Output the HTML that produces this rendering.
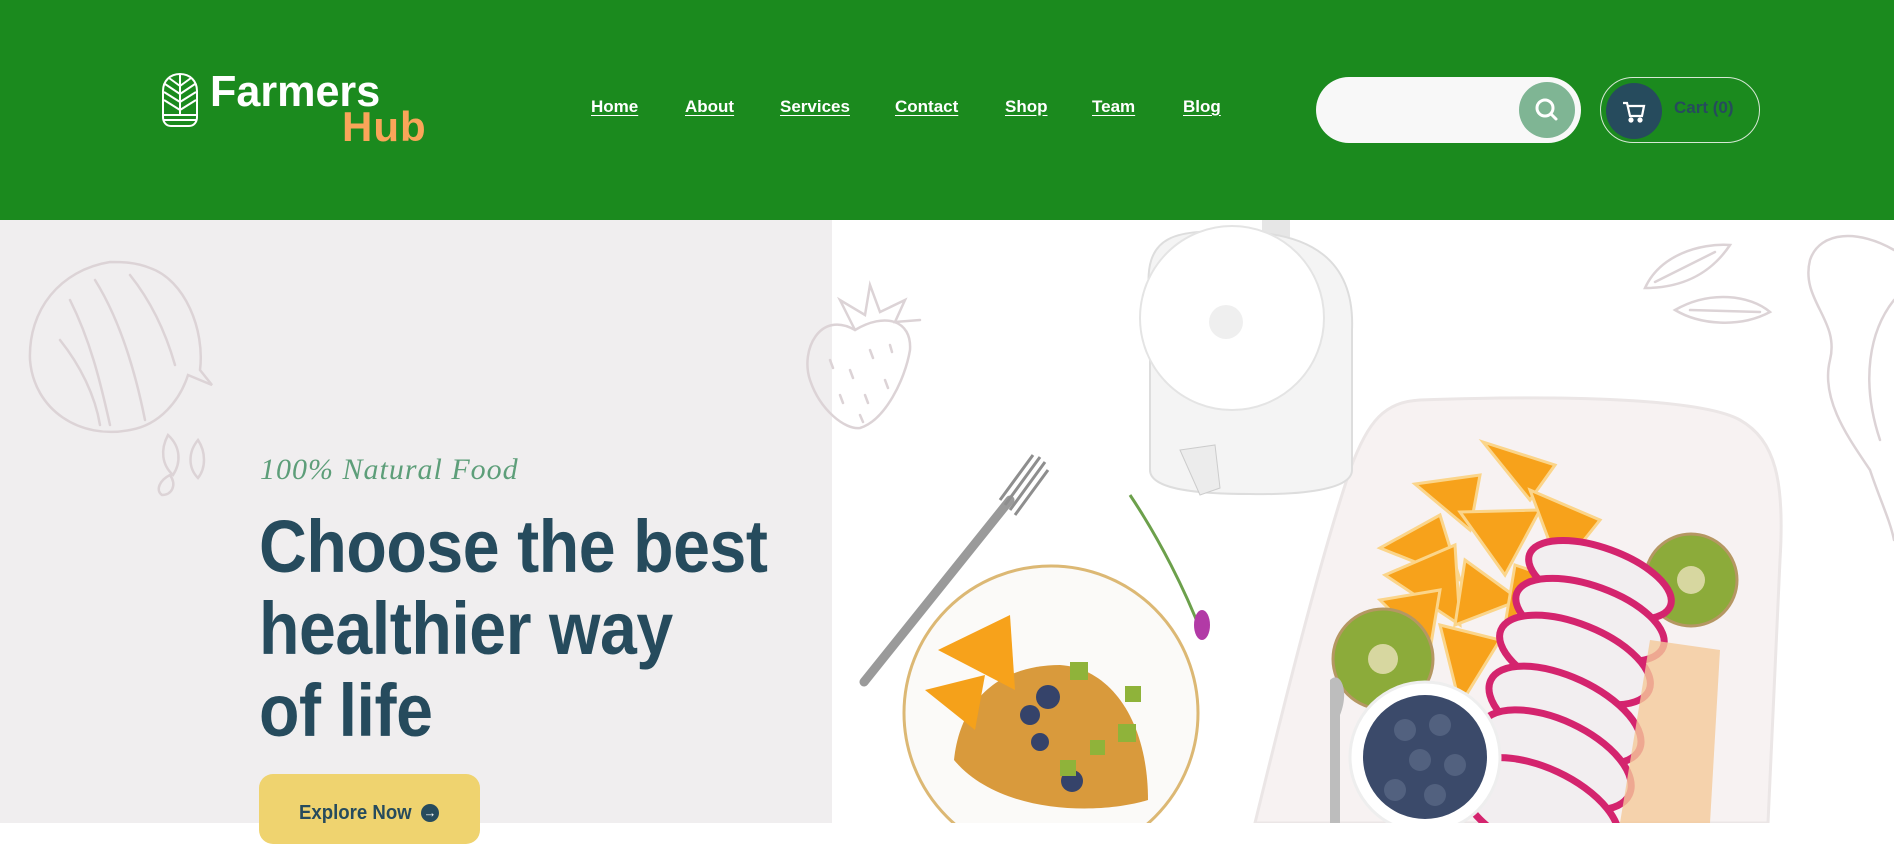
<!DOCTYPE html>
<html><head><meta charset="utf-8">
<style>
*{margin:0;padding:0;box-sizing:border-box}
html,body{width:1894px;height:823px;overflow:hidden;background:#fff;font-family:"Liberation Sans",Arial,sans-serif}
header{position:absolute;left:0;top:0;width:1894px;height:220px;background:#1b8a1e}
.logo-icon{position:absolute;left:161px;top:72px}
.l1{position:absolute;left:210px;top:70px;font:900 44px/1 "Liberation Sans",sans-serif;color:#fff;letter-spacing:0px;transform:scaleX(0.98);transform-origin:left}
.l2{position:absolute;left:342px;top:106px;font:900 42px/1 "Liberation Sans",sans-serif;color:#f9a559;letter-spacing:1px}
nav a{position:absolute;top:97px;color:#fff;font-weight:700;font-size:17px;text-decoration:underline;text-underline-offset:3px}
.search{position:absolute;left:1316px;top:77px;width:265px;height:66px;border-radius:33px;background:#f8f8f8}
.sbtn{position:absolute;left:1519px;top:82px;width:56px;height:56px;border-radius:50%;background:#7fb594}
.cart{position:absolute;left:1600px;top:77px;width:160px;height:66px;border-radius:33px;border:1px solid #d6e8d5}
.cbtn{position:absolute;left:1606px;top:83px;width:56px;height:56px;border-radius:50%;background:#264b5d}
.ctext{position:absolute;left:1674px;top:98px;font-size:17px;font-weight:700;color:#264b5d}
.left{position:absolute;left:0;top:220px;width:832px;height:603px;background:#f0eeef}
.tag{position:absolute;left:260px;top:455px;font:italic 30px/1 "Liberation Serif",serif;color:#5d9e79;letter-spacing:1px}
h1{position:absolute;left:259px;top:506px;font-size:74px;line-height:82px;font-weight:700;color:#264b5d;letter-spacing:-0.5px;transform:scaleX(0.895);transform-origin:left;white-space:nowrap}
.btn{position:absolute;left:259px;top:774px;width:221px;height:70px;border-radius:14px;background:#efd36f}
.btn span{position:absolute;left:40px;top:28px;font-size:20px;font-weight:700;color:#264b5d;transform:scaleX(0.93);transform-origin:left}
.btn i{position:absolute;left:162px;top:30px;width:18px;height:18px;border-radius:50%;background:#264b5d;color:#fff;font-style:normal;font-size:13px;line-height:18px;text-align:center}
svg.art{position:absolute;left:0;top:0}
</style></head><body>
<div class="left"></div>
<svg class="art" width="1894" height="823" viewBox="0 0 1894 823">
 <g fill="none" stroke="#dcd3d6" stroke-width="2.5" stroke-linecap="round">
  <path d="M110 262 C60 270 28 310 30 360 C34 410 80 440 130 430 C160 425 180 400 188 375 L212 385 L200 370 C205 330 185 280 150 268 C135 262 122 262 110 262 Z"/>
  <path d="M70 300 C90 340 100 380 110 425 M95 280 C120 320 135 370 145 420 M60 340 C80 365 95 395 100 425 M130 275 C150 300 165 330 175 365"/>
  <path d="M168 435 c-8 15 -6 30 5 40 c8 -12 8 -28 -5 -40z M198 440 c-10 12 -10 28 0 38 c8 -10 8 -26 0 -38z M170 475 c-10 5 -15 15 -8 20 c10 0 15 -10 8 -20z"/>
  <path d="M855 330 C820 310 800 350 810 380 C820 410 845 430 860 428 C885 420 905 380 910 350 C912 320 885 312 855 330 Z"/>
  <path d="M855 330 L840 300 L865 315 L870 285 L880 312 L905 300 L895 322 L920 320 M830 360 l3 8 M850 370 l3 8 M870 350 l3 8 M840 395 l3 8 M865 395 l3 8 M885 380 l3 8 M860 415 l3 7 M890 345 l2 7"/>
  <path d="M1645 288 C1660 255 1700 243 1730 245 C1710 275 1680 288 1645 288 Z M1655 282 L1715 252"/>
  <path d="M1675 310 C1710 290 1750 295 1770 312 C1740 328 1700 325 1675 310 Z M1690 310 L1760 312"/>
  <path d="M1894 250 C1860 230 1820 230 1810 260 C1800 300 1840 320 1830 360 C1820 400 1850 440 1870 470 C1880 500 1890 520 1894 540"/>
  <path d="M1894 300 C1870 330 1860 380 1880 440"/>
 </g>
 <path d="M1420 400 C1560 395 1700 398 1740 420 C1775 440 1785 480 1780 560 L1768 823 L1255 823 C1285 700 1320 560 1350 470 C1368 420 1385 402 1420 400 Z" fill="#f7f2f2" stroke="#ebe6e6" stroke-width="3"/>
 <rect x="1262" y="208" width="28" height="40" fill="#e6e6e6"/>
 <path d="M1150 300 C1140 230 1180 230 1240 232 C1310 232 1355 260 1352 330 L1352 470 C1352 490 1300 495 1250 494 C1200 494 1150 490 1150 470 Z" fill="#f4f4f4" stroke="#ddd" stroke-width="2"/>
 <circle cx="1232" cy="318" r="92" fill="#fff" stroke="#e4e4e4" stroke-width="2"/>
 <circle cx="1226" cy="322" r="17" fill="#efefef"/>
 <path d="M1180 450 L1200 495 L1220 488 L1215 445 Z" fill="#ececec" stroke="#ccc"/>
 <path d="M864 682 L1010 500" stroke="#9a9a9a" stroke-width="9" stroke-linecap="round"/>
 <path d="M1005 505 L1040 457 M1010 510 L1045 462 M1015 515 L1048 470 M1000 500 L1033 455" stroke="#8e8e8e" stroke-width="3"/>
 <circle cx="1051" cy="713" r="147" fill="#fbfaf8" stroke="#dcb874" stroke-width="3"/>
 <path d="M954 760 C960 700 1000 665 1060 665 C1110 668 1148 720 1148 800 C1100 815 1000 815 954 760Z" fill="#d99a3c"/>
 <path d="M938 650 L1010 615 L1015 690 Z" fill="#f7a21b"/>
 <path d="M925 690 L985 675 L975 730 Z" fill="#f5a11a"/>
 <g fill="#35436a"><circle cx="1048" cy="697" r="12"/><circle cx="1030" cy="715" r="10"/><circle cx="1072" cy="781" r="11"/><circle cx="1040" cy="742" r="9"/></g>
 <g fill="#8fb33a"><rect x="1070" y="662" width="18" height="18"/><rect x="1125" y="686" width="16" height="16"/><rect x="1118" y="724" width="18" height="18"/><rect x="1090" y="740" width="15" height="15"/><rect x="1060" y="760" width="16" height="16"/></g>
 <path d="M1130 495 C1160 540 1185 590 1202 634" stroke="#6ca04b" stroke-width="3" fill="none"/>
 <ellipse cx="1202" cy="625" rx="8" ry="15" fill="#b23aa6"/>
 <g fill="#f7a21b" stroke="#fbd58a" stroke-width="3">
  <path d="M1483 442 L1555 465 L1530 500 Z"/><path d="M1415 484 L1480 475 L1470 530 Z"/>
  <path d="M1460 512 L1540 510 L1505 575 Z"/><path d="M1530 490 L1600 520 L1560 570 Z"/>
  <path d="M1380 548 L1440 515 L1460 580 Z"/><path d="M1385 575 L1455 545 L1460 625 Z"/>
  <path d="M1465 560 L1520 600 L1455 625 Z"/><path d="M1515 565 L1560 580 L1505 625 Z"/>
  <path d="M1380 600 L1440 590 L1430 650 Z"/><path d="M1440 625 L1500 640 L1460 705 Z"/>
 </g>
 <circle cx="1691" cy="580" r="46" fill="#8cab3a" stroke="#b59762" stroke-width="3"/><circle cx="1691" cy="580" r="14" fill="#d7d7a0"/>
 <circle cx="1383" cy="659" r="50" fill="#8cab3a" stroke="#b59762" stroke-width="3"/><circle cx="1383" cy="659" r="15" fill="#d7d7a0"/>
 <g fill="#f2eef0" stroke="#d4246e" stroke-width="7">
  <ellipse cx="1600" cy="580" rx="75" ry="32" transform="rotate(20 1600 580)"/>
  <ellipse cx="1590" cy="620" rx="78" ry="34" transform="rotate(20 1590 620)"/>
  <ellipse cx="1575" cy="660" rx="80" ry="36" transform="rotate(22 1575 660)"/>
  <ellipse cx="1565" cy="715" rx="82" ry="38" transform="rotate(25 1565 715)"/>
  <ellipse cx="1555" cy="760" rx="82" ry="40" transform="rotate(25 1555 760)"/>
  <ellipse cx="1540" cy="810" rx="85" ry="42" transform="rotate(25 1540 810)"/>
 </g>
 <path d="M1650 640 L1720 650 L1710 823 L1620 823 Z" fill="#f4c99a" opacity=".8"/>
 <circle cx="1425" cy="757" r="75" fill="#fff" stroke="#eee" stroke-width="3"/>
 <circle cx="1425" cy="757" r="62" fill="#3b4a6a"/>
 <g fill="#52617f"><circle cx="1405" cy="730" r="11"/><circle cx="1440" cy="725" r="11"/><circle cx="1420" cy="760" r="11"/><circle cx="1455" cy="765" r="11"/><circle cx="1395" cy="790" r="11"/><circle cx="1435" cy="795" r="11"/></g>
 <path d="M1330 680 C1340 670 1350 690 1340 715 L1340 823 L1330 823 Z" fill="#bdbdbd"/>
</svg>
<header>
 <svg class="logo-icon" width="38" height="56" viewBox="0 0 38 56" fill="none" stroke="#fff" stroke-width="2">
  <path d="M19 2 C9 2 2 9 2 19 L2 45 C2 50 5 54 10 54 L28 54 C33 54 36 50 36 45 L36 19 C36 9 29 2 19 2Z"/>
  <path d="M19 3 L19 43 M19 14 L8 6 M19 22 L4 12 M19 30 L3 20 M19 38 L3 28 M19 14 L30 6 M19 22 L34 12 M19 30 L35 20 M19 38 L35 28 M2 43 L36 43 M3 48 L35 48"/>
 </svg>
 <div class="l1">Farmers</div>
 <div class="l2">Hub</div>
 <nav>
  <a style="left:591px">Home</a><a style="left:685px">About</a><a style="left:780px">Services</a><a style="left:895px">Contact</a><a style="left:1005px">Shop</a><a style="left:1092px">Team</a><a style="left:1183px">Blog</a>
 </nav>
 <div class="search"></div>
 <div class="sbtn"><svg width="56" height="56" viewBox="0 0 56 56" fill="none" stroke="#fff" stroke-width="3" stroke-linecap="round"><circle cx="26" cy="26" r="8"/><path d="M32 32 L37 37"/></svg></div>
 <div class="cart"></div>
 <div class="cbtn"><svg width="56" height="56" viewBox="0 0 56 56" fill="none" stroke="#fff" stroke-width="2.2"><path d="M17 20 H21 L24 33 H36 L38 23 H22"/><circle cx="25" cy="37" r="1.5" fill="#fff"/><circle cx="34" cy="37" r="1.5" fill="#fff"/></svg></div>
 <div class="ctext">Cart (0)</div>
</header>
<div class="tag">100% Natural Food</div>
<h1>Choose the best<br>healthier way<br>of life</h1>
<div class="btn"><span>Explore Now</span><i style="left:162px">→</i></div>
</body></html>
